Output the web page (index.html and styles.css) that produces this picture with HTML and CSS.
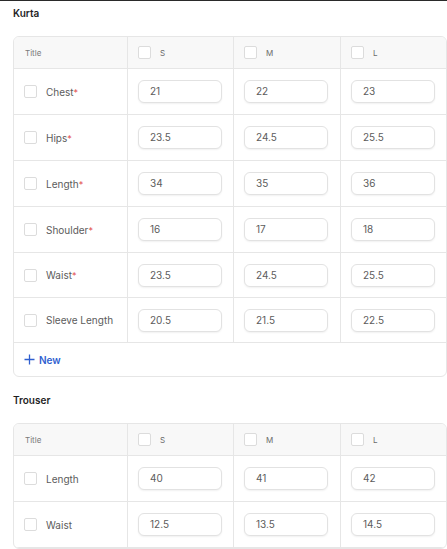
FILE: index.html
```html
<!DOCTYPE html>
<html lang="en">

<head>
	<meta charset="utf-8" />
	<title>Size chart</title>
	<link rel="stylesheet" href="styles.css">
</head>

<body>
	<div class="page">
		<h3 class="section-title">Kurta</h3>
		<div class="card">
			<div class="grid">
				<div class="cell head"><span class="head-title">Title</span></div>
				<div class="cell head"><span class="box"></span><span class="size">S</span></div>
				<div class="cell head"><span class="box"></span><span class="size">M</span></div>
				<div class="cell head"><span class="box"></span><span class="size">L</span></div>

				<div class="cell"><span class="box"></span><span class="label">Chest<i>*</i></span></div>
				<div class="cell"><div class="input">21</div></div>
				<div class="cell"><div class="input">22</div></div>
				<div class="cell"><div class="input">23</div></div>

				<div class="cell"><span class="box"></span><span class="label">Hips<i>*</i></span></div>
				<div class="cell"><div class="input">23.5</div></div>
				<div class="cell"><div class="input">24.5</div></div>
				<div class="cell"><div class="input">25.5</div></div>

				<div class="cell"><span class="box"></span><span class="label">Length<i>*</i></span></div>
				<div class="cell"><div class="input">34</div></div>
				<div class="cell"><div class="input">35</div></div>
				<div class="cell"><div class="input">36</div></div>

				<div class="cell"><span class="box"></span><span class="label">Shoulder<i>*</i></span></div>
				<div class="cell"><div class="input">16</div></div>
				<div class="cell"><div class="input">17</div></div>
				<div class="cell"><div class="input">18</div></div>

				<div class="cell short"><span class="box"></span><span class="label">Waist<i>*</i></span></div>
				<div class="cell short"><div class="input">23.5</div></div>
				<div class="cell short"><div class="input">24.5</div></div>
				<div class="cell short"><div class="input">25.5</div></div>

				<div class="cell short"><span class="box"></span><span class="label">Sleeve Length</span></div>
				<div class="cell short"><div class="input">20.5</div></div>
				<div class="cell short"><div class="input">21.5</div></div>
				<div class="cell short"><div class="input">22.5</div></div>
			</div>
			<div class="add-row">
				<svg width="11" height="11" viewBox="0 0 11 11">
					<path d="M5.5 0.5v10M0.5 5.5h10" stroke="currentColor" stroke-width="1.3" fill="none"></path>
				</svg>
				<span>New</span>
			</div>
		</div>

		<h3 class="section-title">Trouser</h3>
		<div class="card">
			<div class="grid">
				<div class="cell head"><span class="head-title">Title</span></div>
				<div class="cell head"><span class="box"></span><span class="size">S</span></div>
				<div class="cell head"><span class="box"></span><span class="size">M</span></div>
				<div class="cell head"><span class="box"></span><span class="size">L</span></div>

				<div class="cell"><span class="box"></span><span class="label">Length</span></div>
				<div class="cell"><div class="input">40</div></div>
				<div class="cell"><div class="input">41</div></div>
				<div class="cell"><div class="input">42</div></div>

				<div class="cell"><span class="box"></span><span class="label">Waist</span></div>
				<div class="cell"><div class="input">12.5</div></div>
				<div class="cell"><div class="input">13.5</div></div>
				<div class="cell"><div class="input">14.5</div></div>
			</div>
		</div>
	</div>
</body>

</html>
```

FILE: styles.css
```css
body {
	margin: 0;
	font-family: Inter, "Liberation Sans", sans-serif;
	color: #4a4a4a;
	background: #fff;
	border-top: 1px solid #2a2a2a;
}

.page {
	padding: 5px 0 0 13px;
}

.section-title {
	margin: 0 0 16px 0;
	font-size: 10px;
	line-height: 14px;
	font-weight: 600;
	color: #1f1f1f;
}

.card {
	width: 434px;
	box-sizing: border-box;
	border: 1px solid #e6e6e6;
	border-radius: 6px;
	overflow: hidden;
	margin-bottom: 16px;
}

.grid {
	display: grid;
	grid-template-columns: 114px 106px 107px 1fr;
}

.cell {
	display: flex;
	align-items: center;
	height: 45px;
	padding-left: 10px;
	border-bottom: 1px solid #e6e6e6;
	border-right: 1px solid #e6e6e6;
}

.cell.short {
	height: 44px;
}

.cell:nth-child(4n) {
	border-right: none;
}

.cell.head {
	height: 31px;
	background: #f8f8f8;
}

.head-title {
	font-size: 8px;
	color: #7a7a7a;
	padding-left: 1px;
}

.size {
	font-size: 8px;
	color: #6a6a6a;
	margin-left: 9px;
}

.box {
	width: 13px;
	height: 13px;
	box-sizing: border-box;
	border: 1px solid #dcdcdc;
	border-radius: 2px;
	background: #fff;
	flex: none;
}

.label {
	font-size: 10px;
	color: #5c5c5c;
	margin-left: 9px;
}

.label i {
	font-style: normal;
	color: #e24c4c;
	font-size: 9px;
}

.input {
	width: 84px;
	height: 23px;
	box-sizing: border-box;
	border: 1px solid #e2e2e2;
	border-radius: 6px;
	box-shadow: 0 1px 2px rgba(0, 0, 0, 0.06);
	padding-left: 11px;
	font-size: 10px;
	line-height: 21px;
	color: #5c5c5c;
	background: #fff;
}

.add-row {
	height: 33px;
	display: flex;
	align-items: center;
	gap: 4px;
	padding-left: 10px;
	color: #2f5fd0;
	font-size: 10px;
	font-weight: 600;
}
```
